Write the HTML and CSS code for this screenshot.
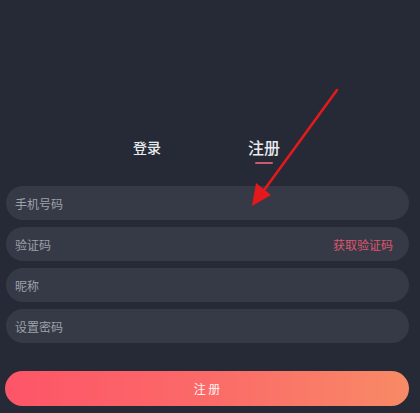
FILE: index.html
```html
<!DOCTYPE html>
<html lang="zh">
<head>
<meta charset="utf-8">
<link rel="stylesheet" href="styles.css">
</head>
<body>
<div class="page">
  <div class="tabs">
    <div class="tab">登录</div>
    <div class="tab active">注册</div>
  </div>
  <form class="form">
    <div class="field"><span class="ph">手机号码</span></div>
    <div class="field"><span class="ph">验证码</span><span class="code">获取验证码</span></div>
    <div class="field"><span class="ph">昵称</span></div>
    <div class="field"><span class="ph">设置密码</span></div>
  </form>
  <div class="submit">注 册</div>
  <svg class="arrow" width="420" height="413" viewBox="0 0 420 413">
    <line x1="337" y1="90" x2="262" y2="193" stroke="#e3191c" stroke-width="2.6" stroke-linecap="round"/>
    <polygon points="252,206 256,183 271,195" fill="#e3191c"/>
  </svg>
</div>
</body>
</html>
```
FILE: styles.css
```css
html, body {
  margin: 0;
  padding: 0;
  background: #252a36;
}
.page {
  position: relative;
  width: 420px;
  height: 413px;
  overflow: hidden;
  font-family: "Noto Sans CJK SC", "Noto Sans", sans-serif;
  display: flex;
  flex-direction: column;
  padding: 0 11px 0 6px;
  box-sizing: border-box;
}
.tabs {
  display: flex;
  justify-content: center;
  align-items: flex-end;
  gap: 87px;
  margin-top: 134px;
  height: 26px;
  padding-right: 2px;
}
.tab {
  color: #e9eaee;
  font-size: 14px;
  font-weight: 500;
  line-height: 20px;
  position: relative;
  padding-bottom: 3px;
}
.tab.active {
  font-size: 16px;
  line-height: 22px;
  padding-bottom: 2px;
}
.tab.active::after {
  content: "";
  position: absolute;
  left: 7px;
  right: 7px;
  bottom: -4px;
  height: 2px;
  background: #c95a74;
  border-radius: 1px;
}
.form {
  display: flex;
  flex-direction: column;
  gap: 7px;
  margin: 26px 0 0 0;
}
.field {
  height: 34px;
  background: #363a46;
  border-radius: 17px;
  display: flex;
  align-items: center;
  justify-content: space-between;
  padding: 0 16px 0 9px;
}
.ph {
  color: #9da1ab;
  font-size: 12px;
}
.code {
  color: #dc566e;
  font-size: 12px;
}
.submit {
  margin-top: 28px;
  height: 35px;
  border-radius: 18px;
  background: linear-gradient(90deg, #fd5568 0%, #fb6a68 50%, #f88a66 100%);
  color: #fff3f1;
  font-size: 12px;
  display: flex;
  align-items: center;
  justify-content: center;
  margin-left: -1px;
  margin-right: 0;
}
.arrow {
  position: absolute;
  left: 0;
  top: 0;
  pointer-events: none;
}
```
